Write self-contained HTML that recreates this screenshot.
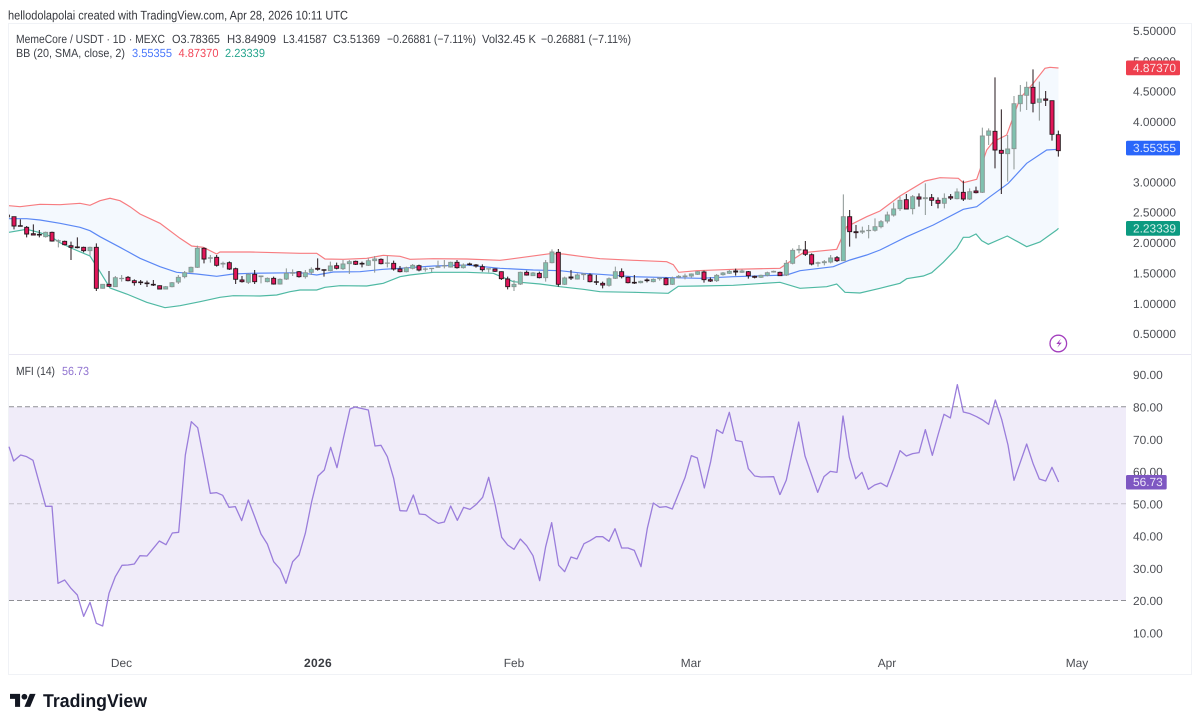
<!DOCTYPE html>
<html lang="en"><head><meta charset="utf-8"><title>MemeCore / USDT chart</title>
<style>
html,body{margin:0;padding:0;background:#fff;width:1200px;height:727px;overflow:hidden}
svg{display:block;font-family:"Liberation Sans",sans-serif;text-rendering:geometricPrecision;filter:blur(.3px)}
.uw{fill:none;stroke:#8b9593;stroke-width:3}
.ub{fill:#7fc1af;stroke:#8b9593;stroke-width:2.8}
.dw{fill:none;stroke:#26181d;stroke-width:3}
.db{fill:#e2165a;stroke:#26181d;stroke-width:2.8}
.ax{font-size:11.9px;fill:#4a4c52}
.lg{font-size:11.8px;fill:#3c3f46}
.m{fill:none;stroke:#9a7ddb;stroke-width:3.9;stroke-linejoin:round}
</style></head><body>
<svg width="1200" height="727" viewBox="0 0 1200 727" xmlns="http://www.w3.org/2000/svg">
<rect width="1200" height="727" fill="#fff"/>
<rect x="8.5" y="23.5" width="1183" height="651" fill="#fff" stroke="#f0f2f6"/>
<line x1="9" y1="354.5" x2="1191" y2="354.5" stroke="#e8e6f2"/>

<polygon fill="#f4f9fe" points="9,205.7 20,206.7 40,204.3 60,204.7 80,203.3 90,205.3 100,200.7 110,198.3 120,200.7 130,206.7 140,214 160,223.3 180,238.3 191.7,246 203.3,247.3 216.7,254 220,252 250,252 300,253.3 316.7,253.3 325,259 343.3,259.3 366.7,258.3 383.3,255.3 400,256.3 410,259.3 433.3,258.7 466.7,259 500,260.3 508.3,259.3 550,253.7 563.3,254 583.3,256.7 600,258.7 633.3,260.3 666.7,261.7 673.3,264.7 678.7,272.3 696.7,270.7 733.3,269.3 780,268.3 793.3,259.3 803.3,252.7 836.7,249.3 846.7,226.7 866.7,216.7 880,211 900,196 925,181 940,177.7 958.3,178.3 963.3,182.7 976.7,179.3 986.7,150 993.3,141.7 1006.7,135 1020,98.3 1033.3,83.3 1045,68.3 1050,67.3 1058.5,68 1058.5,228.3 1056.7,230 1040,242 1026.7,246.7 1007.3,236 988.3,244.3 981.7,240.7 976,234 969.3,237.3 963.3,237.3 956.7,248.3 943.3,262.3 931.7,272.7 923.3,276 906.7,278.7 900,283.3 880,288.3 860,293 845,292.3 836.7,284 826.7,286.7 800,288.3 780,282.3 733.3,285.3 700,286 678.3,286.3 668.3,293.3 633.3,292.3 600,291.7 583.3,289.3 560,286.7 540,284 513.3,281.7 493.3,273.3 466.7,272.3 433.3,272.3 410,275 400,276.7 383.3,283.3 366.7,286 340,285.7 325,287.3 316.7,290 300,290 290,291.7 276.7,295 260,296 233.3,295.7 220,297.3 200,301.7 180,305.7 165,307.7 146.7,302.3 126.7,294 110,288 100,271.7 90,256 73.3,249 60,242.7 50,236 40,232.7 26.7,229.3 9,232.3"/>
<polyline fill="none" stroke="#f77c80" stroke-width="1.2" points="9,205.7 20,206.7 40,204.3 60,204.7 80,203.3 90,205.3 100,200.7 110,198.3 120,200.7 130,206.7 140,214 160,223.3 180,238.3 191.7,246 203.3,247.3 216.7,254 220,252 250,252 300,253.3 316.7,253.3 325,259 343.3,259.3 366.7,258.3 383.3,255.3 400,256.3 410,259.3 433.3,258.7 466.7,259 500,260.3 508.3,259.3 550,253.7 563.3,254 583.3,256.7 600,258.7 633.3,260.3 666.7,261.7 673.3,264.7 678.7,272.3 696.7,270.7 733.3,269.3 780,268.3 793.3,259.3 803.3,252.7 836.7,249.3 846.7,226.7 866.7,216.7 880,211 900,196 925,181 940,177.7 958.3,178.3 963.3,182.7 976.7,179.3 986.7,150 993.3,141.7 1006.7,135 1020,98.3 1033.3,83.3 1045,68.3 1050,67.3 1058.5,68"/>
<polyline fill="none" stroke="#5b88f5" stroke-width="1.2" points="9,218.7 26.7,218.7 40,220 60,223.3 80,227.3 90,230.7 100,236.7 120,247.3 140,258.3 160,266.7 176.7,272.3 196.7,274 216.7,276.3 233.3,274 250,273.3 300,272.7 316.7,275 333.3,272 360,271.7 383.3,269.3 400,268.3 433.3,266 466.7,265 500,268.3 533.3,270 560,270.7 583.3,273.3 600,274.3 633.3,276.7 673.3,277.7 700,278.3 733.3,276.7 786.7,275 800,270.7 833.3,266.7 850,260 866.7,255 880,250 906.7,236.7 933.3,225 963.3,209.3 976.7,206.7 990,196.7 1008.3,183.3 1026.7,163.3 1046.7,150 1058.5,149.3"/>
<polyline fill="none" stroke="#4fb9a3" stroke-width="1.2" points="9,232.3 26.7,229.3 40,232.7 50,236 60,242.7 73.3,249 90,256 100,271.7 110,288 126.7,294 146.7,302.3 165,307.7 180,305.7 200,301.7 220,297.3 233.3,295.7 260,296 276.7,295 290,291.7 300,290 316.7,290 325,287.3 340,285.7 366.7,286 383.3,283.3 400,276.7 410,275 433.3,272.3 466.7,272.3 493.3,273.3 513.3,281.7 540,284 560,286.7 583.3,289.3 600,291.7 633.3,292.3 668.3,293.3 678.3,286.3 700,286 733.3,285.3 780,282.3 800,288.3 826.7,286.7 836.7,284 845,292.3 860,293 880,288.3 900,283.3 906.7,278.7 923.3,276 931.7,272.7 943.3,262.3 956.7,248.3 963.3,237.3 969.3,237.3 976,234 981.7,240.7 988.3,244.3 1007.3,236 1026.7,246.7 1040,242 1056.7,230 1058.5,228.3"/>

<g transform="translate(0,190) scale(.33333)">
<path class="uw" d="M137 125V143M175 148V172M270 170V196M308 282V296M346 258V291M365 255V275M497 288V298M516 276V292M535 255V282M554 243V265M573 230V248M592 167V234M631 195V218M669 215V233M745 250V282M783 257V280M802 262V277M840 265V284M859 235V270M878 238V258"/>
<path class="ub" d="M131 127h12V140h-12zM169 152h12V153h-12zM264 172h12V182h-12zM302 283h12V295h-12zM340 263h12V290h-12zM359 265h12V266h-12zM491 290h12V297h-12zM510 278h12V290h-12zM529 262h12V276h-12zM548 248h12V260h-12zM567 232h12V246h-12zM586 175h12V232h-12zM625 203h12V205h-12zM663 220h12V222h-12zM739 253h12V277h-12zM777 258h12V260h-12zM796 265h12V275h-12zM834 268h12V282h-12zM853 250h12V267h-12zM872 248h12V250h-12z"/>
<path class="dw" d="M28 74V82M42 80V118M61 88V109M80 108V142M100 103V135M118 120V142M156 125V155M194 152V166M213 155V210M232 142V175M251 170V187M289 160V303M327 243V290M384 258V274M403 268V287M422 270V285M441 272V291M460 270V288M479 286V298M612 172V220M650 195V230M688 214V240M707 233V282M726 258V278M764 240V282M821 260V284M897 243V263"/>
<path class="db" d="M36 80h12V108h-12zM55 107h12V109h-12zM74 112h12V132h-12zM94 131h12V135h-12zM112 133h12V135h-12zM150 127h12V153h-12zM188 154h12V164h-12zM207 167h12V172h-12zM226 171h12V173h-12zM245 172h12V182h-12zM283 172h12V295h-12zM321 283h12V289h-12zM378 262h12V272h-12zM397 272h12V278h-12zM416 276h12V278h-12zM435 279h12V281h-12zM454 283h12V285h-12zM473 287h12V297h-12zM606 175h12V207h-12zM644 202h12V226h-12zM682 218h12V237h-12zM701 236h12V268h-12zM720 270h12V275h-12zM758 253h12V275h-12zM815 265h12V282h-12zM891 245h12V260h-12z"/>
</g>
<g transform="translate(300,230) scale(.33333)">
<path class="uw" d="M16 120V146M34 112V135M91 95V124M129 90V120M148 90V132M205 85V108M224 78V128M262 78V112M319 110V127M338 102V118M376 112V125M395 114V126M414 92V113M433 90V115M452 95V113M490 100V116M566 115V127M642 150V183M661 125V165M699 126V138M737 90V155M756 58V100M794 140V165M832 130V149M851 130V150"/>
<path class="ub" d="M10 128h12V140h-12zM28 118h12V127h-12zM85 108h12V122h-12zM123 102h12V116h-12zM142 95h12V101h-12zM199 92h12V106h-12zM218 87h12V92h-12zM256 99h12V100h-12zM313 113h12V125h-12zM332 106h12V115h-12zM370 117h12V118h-12zM389 115h12V116h-12zM408 110h12V112h-12zM427 107h12V108h-12zM446 97h12V111h-12zM484 105h12V113h-12zM560 116h12V117h-12zM636 163h12V170h-12zM655 127h12V162h-12zM693 129h12V137h-12zM731 98h12V143h-12zM750 66h12V98h-12zM788 144h12V163h-12zM826 135h12V147h-12zM845 132h12V134h-12z"/>
<path class="dw" d="M53 85V122M72 118V140M110 98V118M167 92V105M186 95V112M243 85V103M281 92V122M300 108V127M357 104V124M471 90V116M509 98V106M528 102V113M547 103V125M585 115V126M604 124V150M623 140V178M680 122V137M718 125V145M775 57V170M813 120V150M870 130V157M889 135V165"/>
<path class="db" d="M47 115h12V118h-12zM66 119h12V121h-12zM104 107h12V115h-12zM161 94h12V103h-12zM180 100h12V102h-12zM237 88h12V101h-12zM275 100h12V117h-12zM294 117h12V125h-12zM351 107h12V120h-12zM465 97h12V113h-12zM503 102h12V104h-12zM522 105h12V108h-12zM541 110h12V119h-12zM579 117h12V124h-12zM598 125h12V146h-12zM617 147h12V170h-12zM674 127h12V135h-12zM712 130h12V143h-12zM769 67h12V163h-12zM807 141h12V144h-12zM864 135h12V155h-12zM883 155h12V157h-12z"/>
</g>
<g transform="translate(600,170) scale(.33333)">
<path class="uw" d="M27 322V350M46 290V327M122 332V340M160 325V337M179 322V332M217 320V345M236 315V325M255 311V328M274 310V323M293 303V315M350 312V336M369 306V317M388 300V312M426 298V309M483 314V324M502 305V319M521 302V308M559 270V318M578 235V283M597 225V250M654 275V290M673 270V286M692 255V280M730 73V273M787 170V192M806 165V205M825 145V185"/>
<path class="ub" d="M21 326h12V346h-12zM40 305h12V325h-12zM116 334h12V338h-12zM154 328h12V335h-12zM173 324h12V326h-12zM211 325h12V343h-12zM230 319h12V322h-12zM249 318h12V320h-12zM268 312h12V318h-12zM287 305h12V313h-12zM344 316h12V332h-12zM363 309h12V314h-12zM382 304h12V310h-12zM420 303h12V307h-12zM477 316h12V322h-12zM496 308h12V316h-12zM515 304h12V306h-12zM553 280h12V315h-12zM572 241h12V280h-12zM591 238h12V240h-12zM648 278h12V280h-12zM667 275h12V278h-12zM686 264h12V276h-12zM724 140h12V272h-12zM781 183h12V186h-12zM800 181h12V182h-12zM819 170h12V181h-12z"/>
<path class="dw" d="M8 335V355M65 295V325M84 320V340M103 315V342M141 325V337M198 322V346M312 302V338M331 322V336M407 296V317M445 303V326M464 317V325M540 305V318M616 213V258M635 250V286M711 258V276M749 120V230M768 165V205"/>
<path class="db" d="M2 340h12V345h-12zM59 305h12V320h-12zM78 322h12V338h-12zM97 337h12V339h-12zM135 330h12V332h-12zM192 325h12V344h-12zM306 306h12V329h-12zM325 329h12V333h-12zM401 303h12V306h-12zM439 305h12V317h-12zM458 319h12V322h-12zM534 307h12V317h-12zM610 240h12V253h-12zM629 254h12V282h-12zM705 263h12V272h-12zM743 140h12V185h-12zM762 185h12V188h-12z"/>
</g>
<g transform="translate(880,20) scale(.33333)">
<path class="uw" d="M3 600V625M22 575V610M41 548V590M60 530V573M98 525V583M136 490V585M193 520V565M231 505V538M269 505V540M307 323V519M326 325V375M383 345V485M402 228V448M421 195V275M440 185V270M478 185V302"/>
<path class="ub" d="M-3 605h12V620h-12zM16 585h12V603h-12zM35 567h12V585h-12zM54 541h12V566h-12zM92 530h12V566h-12zM130 533h12V536h-12zM187 535h12V550h-12zM225 516h12V536h-12zM263 515h12V537h-12zM301 348h12V517h-12zM320 333h12V346h-12zM377 387h12V401h-12zM396 251h12V386h-12zM415 226h12V251h-12zM434 202h12V226h-12zM472 237h12V247h-12z"/>
<path class="dw" d="M79 522V568M117 520V560M155 522V558M174 532V565M212 522V540M250 482V543M288 500V520M345 172V445M364 268V522M459 148V277M497 213V258M516 242V362M535 332V410"/>
<path class="db" d="M73 539h12V567h-12zM111 531h12V537h-12zM149 533h12V541h-12zM168 541h12V550h-12zM206 530h12V534h-12zM244 517h12V537h-12zM282 513h12V518h-12zM339 334h12V390h-12zM358 391h12V400h-12zM453 202h12V250h-12zM491 237h12V241h-12zM510 242h12V343h-12zM529 344h12V392h-12z"/>
</g>

<!-- MFI pane -->
<rect x="9" y="407" width="1117" height="193.5" fill="#f0ecf9"/>
<line x1="9" y1="406.8" x2="1126" y2="406.8" stroke="#8f8f95" stroke-dasharray="5 3"/>
<line x1="9" y1="503.7" x2="1126" y2="503.7" stroke="#c2bfc9" stroke-dasharray="5 3"/>
<line x1="9" y1="600.5" x2="1126" y2="600.5" stroke="#8f8f95" stroke-dasharray="5 3"/>
<g transform="translate(0,355) scale(.33333)"><polyline class="m" points="27,275 41,318 62,300 80,305 99,316 118,385 137,454 156,454 174,685 194,675 213,700 232,720 251,784 270,742 289,805 308,813 327,715 346,665 366,631 384,630 403,627 420,602 441,603 460,580 478,558 498,569 517,534 536,532 556,300 574,200 593,218 612,315 631,415 650,413 668,421 687,457 706,455 725,497 745,435 764,485 783,537 802,567 821,620 840,642 858,685 878,620 897,600 916,535 935,440 954,363 973,345 992,277 1011,338 1030,250 1050,162 1065,156 1105,165 1125,273 1143,271 1162,305 1181,370 1200,468"/></g>
<g transform="translate(400,380) scale(.33333)"><polyline class="m" points="0,392 20,393 40,345 58,402 76,404 96,419 115,430 133,426 152,378 172,421 191,382 210,388 229,373 248,352 266,292 285,372 305,472 323,495 342,508 361,477 380,497 399,527 419,602 437,500 455,428 476,556 494,575 513,531 531,537 552,491 570,482 589,470 608,470 627,484 645,446 665,504 684,504 703,511 723,560 742,445 760,369 779,382 798,380 817,387 836,340 855,293 874,227 892,234 913,324 932,245 950,149 968,160 988,97 1007,181 1026,185 1045,266 1064,288 1083,291 1121,290 1140,345"/></g>
<g transform="translate(780,370) scale(.33333)"><polyline class="m" points="0,374 19,330 38,240 56,156 75,258 113,367 132,320 151,304 171,307 189,138 208,262 227,326 246,307 265,358 284,345 302,339 321,350 341,297 360,242 379,258 398,251 417,248 436,179 457,256 474,195 492,133 511,144 532,44 550,126 570,131 590,140 608,150 626,163 646,90 665,148 684,225 702,331 740,222 759,280 778,327 797,333 816,292 836,336"/></g>

<rect x="0" y="190" width="8" height="120" fill="#fff"/>
<line x1="8.5" y1="190" x2="8.5" y2="320" stroke="#f0f2f6"/>

<!-- header -->
<text x="8" y="19.5" font-size="12.6" fill="#33353b" textLength="340" lengthAdjust="spacingAndGlyphs">hellodolapolai created with TradingView.com, Apr 28, 2026 10:11 UTC</text>
<text class="lg" x="16" y="43" textLength="149" lengthAdjust="spacingAndGlyphs">MemeCore / USDT · 1D · MEXC</text>
<text class="lg" x="172" y="43" textLength="48" lengthAdjust="spacingAndGlyphs">O3.78365</text>
<text class="lg" x="227" y="43" textLength="49" lengthAdjust="spacingAndGlyphs">H3.84909</text>
<text class="lg" x="283" y="43" textLength="44" lengthAdjust="spacingAndGlyphs">L3.41587</text>
<text class="lg" x="333" y="43" textLength="47" lengthAdjust="spacingAndGlyphs">C3.51369</text>
<text class="lg" x="387" y="43" textLength="89" lengthAdjust="spacingAndGlyphs">−0.26881 (−7.11%)</text>
<text class="lg" x="482" y="43" textLength="54" lengthAdjust="spacingAndGlyphs">Vol32.45 K</text>
<text class="lg" x="541" y="43" textLength="90" lengthAdjust="spacingAndGlyphs">−0.26881 (−7.11%)</text>
<text class="lg" x="16" y="57" textLength="109" lengthAdjust="spacingAndGlyphs">BB (20, SMA, close, 2)</text>
<text class="lg" x="132" y="57" textLength="40" lengthAdjust="spacingAndGlyphs" style="fill:#4a78fb">3.55355</text>
<text class="lg" x="178.5" y="57" textLength="40" lengthAdjust="spacingAndGlyphs" style="fill:#f2485a">4.87370</text>
<text class="lg" x="225" y="57" textLength="40" lengthAdjust="spacingAndGlyphs" style="fill:#27a58e">2.23339</text>
<text class="lg" x="16" y="375" textLength="39" lengthAdjust="spacingAndGlyphs">MFI (14)</text>
<text class="lg" x="62" y="375" textLength="27" lengthAdjust="spacingAndGlyphs" style="fill:#9073d0">56.73</text>

<!-- price axis -->
<text class="ax" x="1133" y="35.2">5.50000</text>
<text class="ax" x="1133" y="65.5">5.00000</text>
<text class="ax" x="1133" y="95.5">4.50000</text>
<text class="ax" x="1133" y="125.8">4.00000</text>
<text class="ax" x="1133" y="186.4">3.00000</text>
<text class="ax" x="1133" y="216.7">2.50000</text>
<text class="ax" x="1133" y="247.2">2.00000</text>
<text class="ax" x="1133" y="277.4">1.50000</text>
<text class="ax" x="1133" y="307.8">1.00000</text>
<text class="ax" x="1133" y="338.2">0.50000</text>
<text class="ax" x="1133" y="379.2">90.00</text>
<text class="ax" x="1133" y="411.5">80.00</text>
<text class="ax" x="1133" y="443.8">70.00</text>
<text class="ax" x="1133" y="476">60.00</text>
<text class="ax" x="1133" y="508.3">50.00</text>
<text class="ax" x="1133" y="540.5">40.00</text>
<text class="ax" x="1133" y="572.8">30.00</text>
<text class="ax" x="1133" y="605">20.00</text>
<text class="ax" x="1133" y="637.3">10.00</text>
<rect x="1126" y="60.5" width="54" height="14.7" rx="1.5" fill="#ee3f4e"/>
<text x="1133" y="71.8" font-size="11.9" fill="#fbe3e5">4.87370</text>
<rect x="1126" y="140.7" width="54" height="14.7" rx="1.5" fill="#2a66fa"/>
<text x="1133" y="152" font-size="11.9" fill="#dbe6fe">3.55355</text>
<rect x="1126" y="221" width="54" height="14.7" rx="1.5" fill="#0b9a80"/>
<text x="1133" y="232.3" font-size="11.9" fill="#d8f0eb">2.23339</text>
<rect x="1126" y="475" width="40.7" height="14.5" rx="1.5" fill="#7e57c2"/>
<text x="1133" y="486.2" font-size="11.9" fill="#ece6f7">56.73</text>

<!-- bolt -->
<circle cx="1058.3" cy="343.5" r="8.3" fill="#fff" stroke="#a33fbe" stroke-width="1.3"/>
<path d="M1060.8 338.8l-4.5 5.2h2.900l-2 3.800 4.600-5.200h-2.900z" fill="#a33fbe"/>

<!-- time axis -->
<g text-anchor="middle">
<text class="ax" x="121.5" y="667">Dec</text>
<text x="318" y="667" font-size="12" font-weight="700" fill="#3a3c42" letter-spacing=".3">2026</text>
<text class="ax" x="514" y="667">Feb</text>
<text class="ax" x="691" y="667">Mar</text>
<text class="ax" x="887" y="667">Apr</text>
<text class="ax" x="1077" y="667">May</text>
</g>

<!-- logo -->
<g transform="translate(10,691) scale(.72)" fill="#131722">
<path d="M14 22H7V11H0V4h14v18zM28 22h-8l7.500-18h8L28 22z"/><circle cx="20" cy="8" r="4"/>
</g>
<text x="43" y="707" font-size="18.5" font-weight="700" fill="#131722" textLength="104" lengthAdjust="spacingAndGlyphs">TradingView</text>
</svg>
</body></html>
